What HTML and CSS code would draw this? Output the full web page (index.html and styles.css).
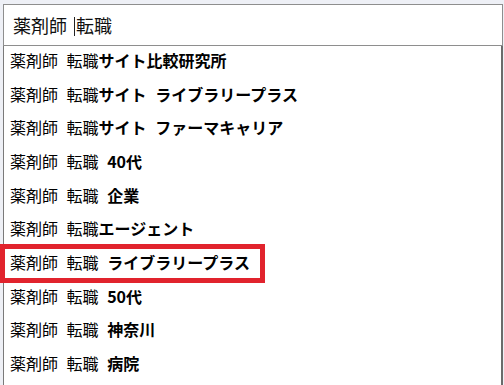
FILE: index.html
```html
<!DOCTYPE html>
<html lang="ja">
<head>
  <meta charset="UTF-8">
  <title>検索候補</title>
  <link rel="stylesheet" href="styles.css">
</head>
<body>

  <div class="search-wrapper">
    <div class="search-box">
      <span class="query">薬剤師 <span class="caret"></span>転職</span>
    </div>
    <ul class="suggest-list">
      <li>薬剤師 転職<b>サイト比較研究所</b></li>
      <li>薬剤師 転職<b>サイト ライブラリープラス</b></li>
      <li>薬剤師 転職<b>サイト ファーマキャリア</b></li>
      <li>薬剤師 転職 <b>40代</b></li>
      <li>薬剤師 転職 <b>企業</b></li>
      <li>薬剤師 転職<b>エージェント</b></li>
      <li>薬剤師 転職 <b>ライブラリープラス</b></li>
      <li>薬剤師 転職 <b>50代</b></li>
      <li>薬剤師 転職 <b>神奈川</b></li>
      <li>薬剤師 転職 <b>病院</b></li>
    </ul>
    <div class="highlight"></div>
  </div>

</body>
</html>
```

FILE: styles.css
```css
* {
  margin: 0;
  padding: 0;
  box-sizing: border-box;
}

body {
  font-family: 'Noto Sans CJK JP', 'Noto Sans', sans-serif;
  background: #eef0f6;
  height: 100vh;
  overflow: hidden;
  color: #000;
}

.search-wrapper {
  position: relative;
  padding-top: 4px;
  padding-left: 3px;
  width: 503px;
  height: 100%;
}

.search-box {
  height: 42px;
  background: #fff;
  border: 1px solid #8e8e8e;
  display: flex;
  align-items: center;
  padding-left: 9px;
}

.query {
  font-size: 18px;
  line-height: 22px;
  color: #111;
  word-spacing: 3px;
}

.caret {
  display: inline-block;
  width: 1px;
  height: 19px;
  background: #222;
  vertical-align: -3px;
  margin-right: 1px;
}

.suggest-list {
  list-style: none;
  background: #fff;
  border-left: 1px solid #7a7a7a;
  border-right: 2px solid #6b6b6b;
  height: calc(100% - 42px);
}

.suggest-list li {
  height: 33.67px;
  line-height: 28px;
  padding-left: 6px;
  font-size: 16px;
  white-space: nowrap;
  word-spacing: 5px;
}

.suggest-list b {
  font-weight: 700;
}

.highlight {
  position: absolute;
  left: 0;
  top: 244px;
  width: 265px;
  height: 39px;
  border: 5px solid #e1232d;
}
```
